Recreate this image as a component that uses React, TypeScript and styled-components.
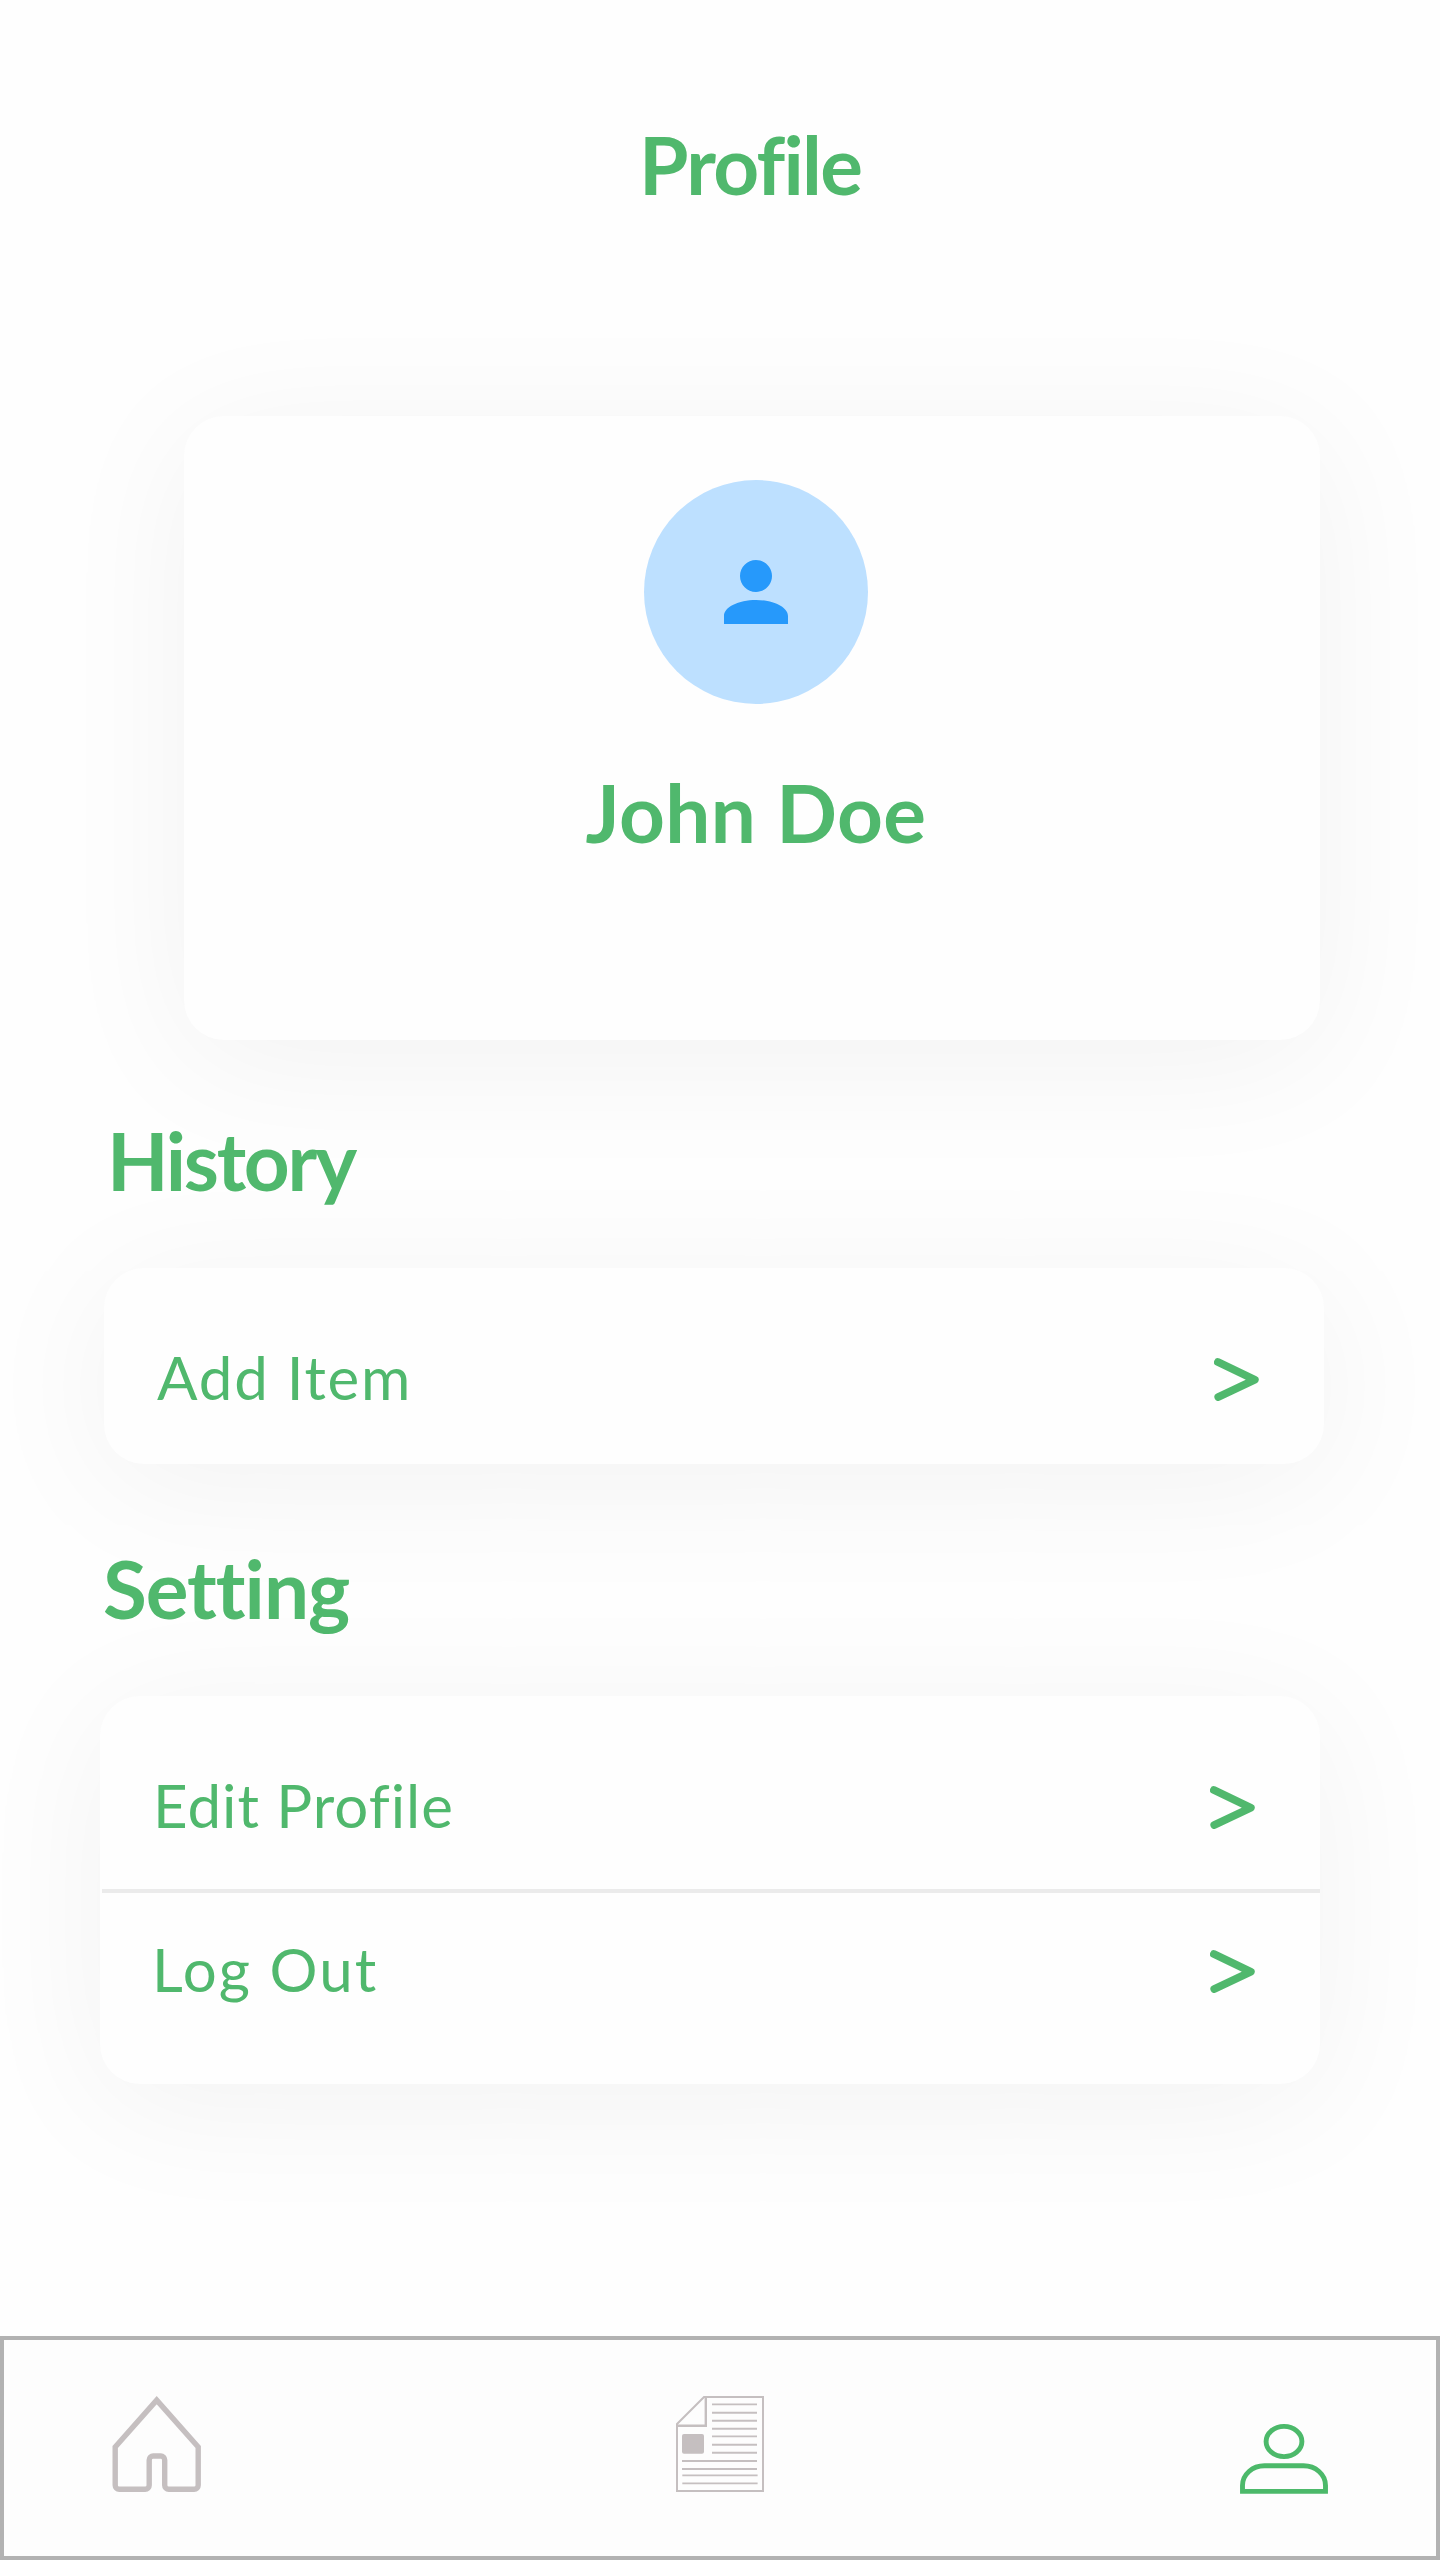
import React from "react";
import styled, { createGlobalStyle } from "styled-components";

const GREEN = "#50b86d";
const GREY = "#c5bfc0";

const GlobalStyle = createGlobalStyle`
  * { box-sizing: border-box; }
  body { margin: 0; background: #fefefe; }
`;

const Page = styled.div`
  width: 1440px;
  height: 2560px;
  display: flex;
  flex-direction: column;
  background: #fefefe;
  color: ${GREEN};
  font-family: Lato, "Open Sans", sans-serif;
  overflow: hidden;
`;

const Heading = styled.h2<{ $spacing: number }>`
  margin: 0;
  font-size: 80px;
  line-height: 96px;
  font-weight: 700;
  white-space: nowrap;
  font-kerning: normal;
  font-variant-ligatures: none;
  letter-spacing: ${(p) => p.$spacing}px;
`;

const Header = styled.header`
  padding: 116px 0 204px 639px;
`;

const Card = styled.section`
  border-radius: 40px;
  background: #fefefe;
  box-shadow: 0 20px 140px rgba(0, 0, 0, 0.052);
`;

const ProfileCard = styled(Card)`
  width: 1136px;
  height: 624px;
  flex: none;
  margin-left: 184px;
  padding: 64px 0 0 8px;
  display: flex;
  flex-direction: column;
  align-items: center;
  gap: 60px;
`;

const Avatar = styled.div`
  width: 224px;
  height: 224px;
  flex: none;
  border-radius: 50%;
  background: #bde0ff;
  display: flex;
  align-items: center;
  justify-content: center;
`;

const Section = styled.div<{ $top: number; $left: number }>`
  display: flex;
  flex-direction: column;
  gap: 60px;
  margin-top: ${(p) => p.$top}px;
  padding-left: ${(p) => p.$left}px;
`;

const SectionTitle = styled(Heading)<{ $inset: number }>`
  padding-left: ${(p) => p.$inset}px;
`;

const ListCard = styled(Card)<{ $height: number }>`
  width: 1220px;
  height: ${(p) => p.$height}px;
  padding-top: 73px;
`;

const Row = styled.div<{ $inset: number }>`
  height: 72px;
  padding: 0 65px 0 ${(p) => p.$inset}px;
  display: flex;
  align-items: center;
  justify-content: space-between;
`;

const Label = styled.span<{ $spacing: number }>`
  font-size: 60px;
  line-height: 72px;
  white-space: nowrap;
  font-variant-ligatures: none;
  letter-spacing: ${(p) => p.$spacing}px;
`;

const Arrow = styled.svg`
  width: 45px;
  height: 43px;
  margin-top: 4px;
`;

const Divider = styled.hr`
  height: 4px;
  margin: 48px 0 40px 2px;
  border: 0;
  background: #ebebeb;
`;

const NavBar = styled.nav`
  height: 224px;
  flex: none;
  margin-top: auto;
  padding: 56px 108px 0;
  border: 4px solid #b2b2b2;
  background: #fdfdfd;
  display: flex;
  justify-content: space-between;
  align-items: flex-start;
`;

const NavIcon = styled.svg<{ $height: number; $drop?: number }>`
  width: 88px;
  height: ${(p) => p.$height}px;
  margin-top: ${(p) => p.$drop ?? 0}px;
  fill: none;
  overflow: visible;
`;

const Chevron = () => (
  <Arrow viewBox="0 0 45 43" fill="none">
    <path
      d="M3.9 4.1 40.8 21.7 4.3 39"
      stroke={GREEN}
      strokeWidth="7.8"
      strokeLinecap="round"
      strokeLinejoin="round"
    />
  </Arrow>
);

type ItemProps = { label: string; spacing: number; inset: number };

const Item = ({ label, spacing, inset }: ItemProps) => (
  <Row $inset={inset}>
    <Label $spacing={spacing}>{label}</Label>
    <Chevron />
  </Row>
);

const columnLines = [8.4, 16.7, 24.7, 32.7, 40.4, 48.7, 56.7];

export default function App() {
  return (
    <Page>
      <GlobalStyle />
      <Header>
        <Heading as="h1" $spacing={-1.7}>Profile</Heading>
      </Header>

      <ProfileCard>
        <Avatar>
          <svg width="96" height="96" viewBox="0 0 24 24" fill="#2699fb">
            <path d="M12 12c2.21 0 4-1.79 4-4s-1.79-4-4-4-4 1.79-4 4 1.79 4 4 4zm0 2c-4.42 0-8 1.79-8 4v2h16v-2c0-2.21-3.58-4-8-4z" />
          </svg>
        </Avatar>
        <Heading $spacing={0.4}>John Doe</Heading>
      </ProfileCard>

      <Section $top={72} $left={104}>
        <SectionTitle $spacing={-2.3} $inset={3}>History</SectionTitle>
        <ListCard $height={196}>
          <Item label="Add Item" spacing={1.8} inset={53} />
        </ListCard>
      </Section>

      <Section $top={76} $left={100}>
        <SectionTitle $spacing={-1} $inset={3}>Setting</SectionTitle>
        <ListCard $height={388}>
          <Item label="Edit Profile" spacing={1} inset={53} />
          <Divider />
          <Item label="Log Out" spacing={2.1} inset={52} />
        </ListCard>
      </Section>

      <NavBar>
        <NavIcon $height={96} viewBox="0 0 88 96" stroke={GREY} strokeWidth="5.4">
          <path d="M3.2 51 44.7 4.1 86.2 51V89.2a4 4 0 0 1-4 4H56.7a4 4 0 0 1-4-4V64a4 4 0 0 0-4-4H41.2a4 4 0 0 0-4 4V89.2a4 4 0 0 1-4 4H7.2a4 4 0 0 1-4-4Z" />
        </NavIcon>
        <NavIcon $height={96} viewBox="0 0 88 96" stroke={GREY} strokeWidth="2">
          <path d="M1 28 28 1H87V95H1Z" />
          <path d="M29.8 1V29.7H1" strokeWidth="2.4" />
          <rect x="6" y="38" width="22" height="19.8" rx="2" fill={GREY} stroke="none" />
          {columnLines.map((y) => (
            <path key={y} d={`M36 ${y}H81`} strokeWidth="1.9" />
          ))}
          <path d="M6 65H81M6 73H81M6.3 79.4H81.6M6.3 87.4H81.6" strokeWidth="1.9" />
        </NavIcon>
        <NavIcon $height={70} $drop={28} viewBox="0 0 88 70" stroke="#4cb96a" strokeWidth="4.9">
          <ellipse cx="44" cy="17.5" rx="17.9" ry="15.1" />
          <path d="M2.5 67.4V61.5C2.5 50.5 12.4 41.8 24.5 41.8H63.5C75.6 41.8 85.5 50.5 85.5 61.5V67.4Z" />
        </NavIcon>
      </NavBar>
    </Page>
  );
}
